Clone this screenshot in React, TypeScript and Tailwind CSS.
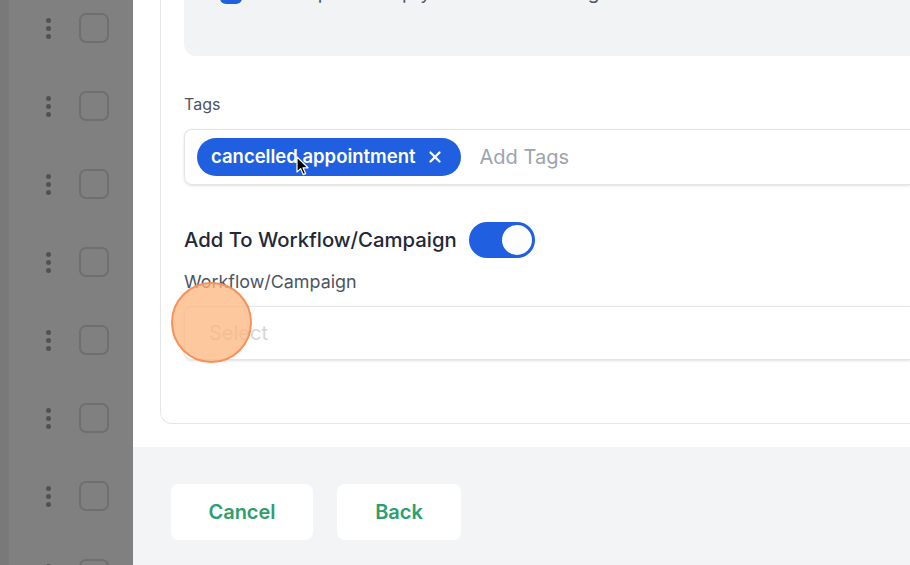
import { X } from "lucide-react";

const rows = [0, 1, 2, 3, 4, 5, 6, 7];

const Kebab = () => (
  <div className="flex flex-col gap-[3px]">
    <span className="w-[5px] h-[5px] rounded-full bg-[#515151]" />
    <span className="w-[5px] h-[5px] rounded-full bg-[#515151]" />
    <span className="w-[5px] h-[5px] rounded-full bg-[#515151]" />
  </div>
);

const Cursor = () => (
  <svg
    className="absolute left-[296px] top-[156px]"
    width="14"
    height="21"
    viewBox="0 0 14 21"
  >
    <path
      d="M1 1 L1 16 L4.6 12.6 L7.2 18.6 L9.6 17.6 L7 11.8 L12 11.8 Z"
      fill="#000"
      stroke="#fff"
      strokeWidth="1.2"
      strokeLinejoin="round"
    />
  </svg>
);

const App = () => {
  return (
    <div className="relative w-[910px] h-[565px] overflow-hidden flex bg-white font-[Inter,sans-serif]">
      {/* Dimmed list on the left */}
      <div className="w-[133px] shrink-0 flex bg-[#808080]">
        <div className="w-[9px] bg-[#797979]" />
        <div className="flex-1 flex flex-col mt-[-11px]">
          {rows.map((r) => (
            <div key={r} className="h-[78px] shrink-0 flex items-center">
              <div className="w-[42px] flex justify-end">
                <Kebab />
              </div>
              <div className="ml-[28px] w-[30px] h-[30px] rounded-[7px] border-2 border-[#6f6f6f]" />
            </div>
          ))}
        </div>
      </div>

      {/* Drawer content */}
      <div className="flex-1 flex flex-col">
        <div className="h-[447px] shrink-0 bg-white pl-[27px]">
          <div className="mt-[-50px] border border-r-0 border-[#e6e7ea] rounded-l-xl pl-[23px] pb-[63px]">
            {/* Update options box */}
            <div className="h-[105px] bg-[#f2f3f5] rounded-bl-xl pl-[36px] pt-[28px]">
              <div className="flex items-center gap-[11px]">
                <span className="w-[22px] h-[22px] rounded-[6px] bg-[#1f5fe0]" />
                <span className="text-[19px] text-[#4b5563]">
                  Don't update empty values for existing records
                </span>
              </div>
            </div>

            <div className="mt-[38px] text-[16px] leading-[20px] text-[#4b5563]">Tags</div>

            <div className="mt-[15px] h-[56px] flex items-center border border-r-0 border-[#e3e5e8] rounded-l-lg pl-[12px] shadow-sm">
              <div className="h-[38px] flex items-center rounded-full bg-[#1f5fe0] pl-[14px] pr-[17px] gap-[10px]">
                <span className="text-[18.5px] font-semibold text-white">cancelled appointment</span>
                <X className="w-[18px] h-[18px] text-white" strokeWidth={3} />
              </div>
              <span className="ml-[19px] text-[20px] text-[#9ca3af]">Add Tags</span>
            </div>

            <div className="mt-[37px] h-[36px] flex items-center gap-[12px]">
              <span className="text-[20.3px] font-medium text-[#1f2937]">Add To Workflow/Campaign</span>
              <div className="w-[66px] h-[36px] rounded-full bg-[#1f5fe0] flex items-center justify-end pr-[3px]">
                <span className="w-[30px] h-[30px] rounded-full bg-white" />
              </div>
            </div>

            <div className="mt-[13px] text-[17.9px] leading-[22px] text-[#4b5563]">Workflow/Campaign</div>

            <div className="mt-[13px] h-[54px] flex items-center border border-r-0 border-[#e3e5e8] rounded-l-lg pl-[24px] shadow-sm">
              <span className="text-[20px] text-[#d4d6da]">Select</span>
            </div>
          </div>
        </div>

        {/* Footer */}
        <div className="flex-1 bg-[#f3f4f6] pl-[38px] pt-[37px]">
          <div className="flex gap-[24px]">
            <button className="w-[142px] h-[56px] rounded-lg bg-white text-[20px] font-semibold text-[#2f9e6e]">
              Cancel
            </button>
            <button className="w-[124px] h-[56px] rounded-lg bg-white text-[20px] font-semibold text-[#2f9e6e]">
              Back
            </button>
          </div>
        </div>
      </div>

      {/* Click indicator */}
      <div className="absolute left-[171px] top-[282px] w-[81px] h-[81px] rounded-full bg-[#fcb67d]/75 border-2 border-[#f8915a]" />

      <Cursor />
    </div>
  );
};

export default App;
